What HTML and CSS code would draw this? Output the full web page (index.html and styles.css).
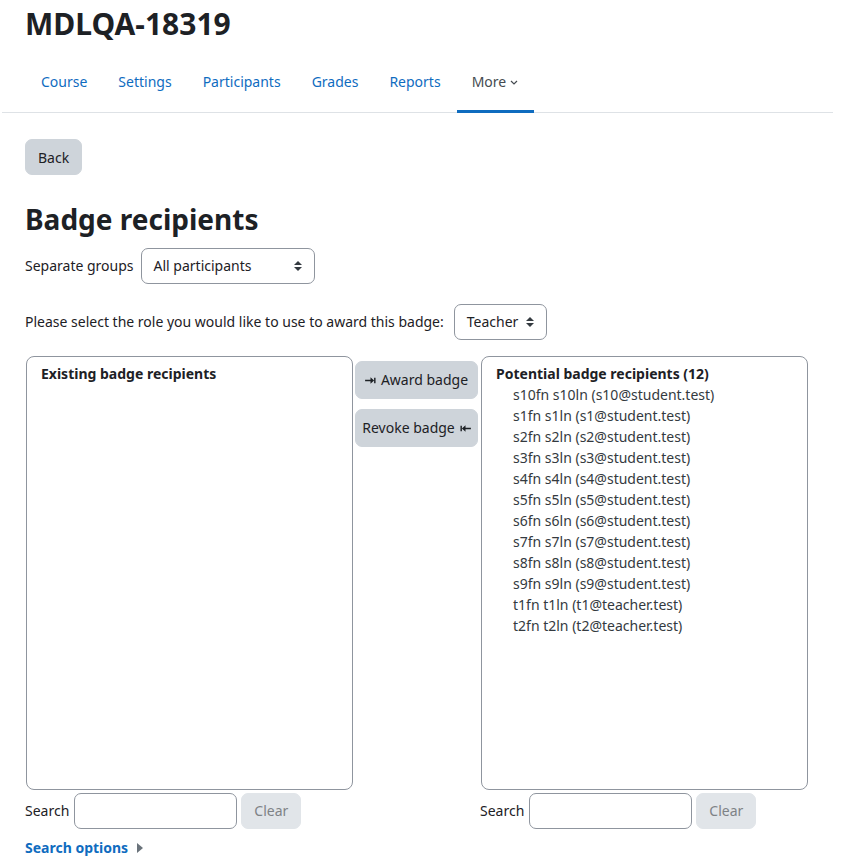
FILE: index.html
```html
<!DOCTYPE html>
<html>
<head>
    <meta charset="utf-8">
    <title>MDLQA-18319: Badge recipients</title>
    <meta name="viewport" content="width=device-width, initial-scale=1">
    <link rel="stylesheet" href="styles.css">
</head>
<body>

<div id="page">
    <header class="page-header">
        <h1>MDLQA-18319</h1>
    </header>

    <nav class="secondary-nav">
        <ul>
            <li><a href="#">Course</a></li>
            <li><a href="#">Settings</a></li>
            <li><a href="#">Participants</a></li>
            <li><a href="#">Grades</a></li>
            <li><a href="#">Reports</a></li>
            <li class="active">
                <a href="#">More
                    <svg class="chevron" viewBox="0 0 8 5"><path d="M1 1l3 3 3-3"></path></svg>
                </a>
            </li>
        </ul>
    </nav>

    <div id="region-main">
        <button class="btn">Back</button>

        <h2>Badge recipients</h2>

        <div class="form-row">
            <label>Separate groups</label>
            <div class="custom-select select-groups">
                <span>All participants</span>
                <svg class="updown" viewBox="0 0 4 5"><path d="M2 0L0 2h4zm0 5L0 3h4z"></path></svg>
            </div>
        </div>

        <div class="form-row role-row">
            <label>Please select the role you would like to use to award this badge:</label>
            <div class="custom-select select-role">
                <span>Teacher</span>
                <svg class="updown" viewBox="0 0 4 5"><path d="M2 0L0 2h4zm0 5L0 3h4z"></path></svg>
            </div>
        </div>

        <div class="recipients">
            <div class="col">
                <div class="listbox">
                    <div class="group-label">Existing badge recipients</div>
                </div>
                <div class="search">
                    <label>Search</label>
                    <div class="form-control"></div>
                    <button class="btn" disabled>Clear</button>
                </div>
                <a class="search-options" href="#">Search options <span class="caret"></span></a>
            </div>

            <div class="actions">
                <button class="btn">
                    <svg class="arrow" viewBox="0 0 12 10"><path d="M0 4.3h7v1.4H0z M6 1.5L10 5 6 8.5z M10 2h1.6v6H10z"></path></svg>
                    Award badge
                </button>
                <button class="btn">
                    Revoke badge
                    <svg class="arrow" viewBox="0 0 12 10"><path d="M0.4 2H2v6H0.4z M2 5L6 1.5v7z M5 4.3h7v1.4H5z"></path></svg>
                </button>
            </div>

            <div class="col">
                <div class="listbox">
                    <div class="group-label">Potential badge recipients (12)</div>
                    <div class="option">s10fn s10ln (s10@student.test)</div>
                    <div class="option">s1fn s1ln (s1@student.test)</div>
                    <div class="option">s2fn s2ln (s2@student.test)</div>
                    <div class="option">s3fn s3ln (s3@student.test)</div>
                    <div class="option">s4fn s4ln (s4@student.test)</div>
                    <div class="option">s5fn s5ln (s5@student.test)</div>
                    <div class="option">s6fn s6ln (s6@student.test)</div>
                    <div class="option">s7fn s7ln (s7@student.test)</div>
                    <div class="option">s8fn s8ln (s8@student.test)</div>
                    <div class="option">s9fn s9ln (s9@student.test)</div>
                    <div class="option">t1fn t1ln (t1@teacher.test)</div>
                    <div class="option">t2fn t2ln (t2@teacher.test)</div>
                </div>
                <div class="search">
                    <label>Search</label>
                    <div class="form-control"></div>
                    <button class="btn" disabled>Clear</button>
                </div>
            </div>
        </div>
    </div>
</div>

</body>
</html>
```

FILE: styles.css
```css
body {
    margin: 0;
    font-family: "Noto Sans", "Open Sans", sans-serif;
    font-size: 14px;
    line-height: 22px;
    color: #1d2125;
    background: #fff;
}
#page {
    margin-left: 2px;
    width: 831px;
}

/* header */
.page-header {padding: 5px 0 0 23px;}
.page-header h1 {
    margin: 0;
    font-size: 30px;
    line-height: 38px;
    font-weight: 700;
}

/* secondary navigation */
.secondary-nav {
    margin-top: 8px;
    border-bottom: 1px solid #dee2e6;
}
.secondary-nav ul {
    list-style: none;
    margin: 0 0 -1px 0;
    padding: 0 0 0 23px;
    display: flex;
}
.secondary-nav a {
    display: flex;
    align-items: center;
    padding: 20px 16px 17px;
    border-bottom: 3px solid transparent;
    color: #0f6cbf;
    text-decoration: none;
}
.secondary-nav li + li a {padding-left: 15px;}
.secondary-nav .active a {
    color: #454b51;
    border-bottom-color: #0f6cbf;
}
.chevron {
    width: 8px;
    height: 5px;
    margin-left: 4px;
    fill: none;
    stroke: #454b51;
    stroke-width: 1.2;
}

/* main */
#region-main {padding: 26px 0 0 23px;}

.btn {
    font: inherit;
    color: #1d2125;
    background: #ced4da;
    border: 1px solid #ced4da;
    border-radius: 7px;
    padding: 7px 12px 5px;
    line-height: 22px;
    cursor: pointer;
}
.btn:disabled {
    background: #e1e5e9;
    border-color: #e1e5e9;
    color: #7e8286;
    cursor: default;
}

h2 {
    margin: 27px 0 0;
    font-size: 28px;
    line-height: 34px;
    font-weight: 700;
}

.form-row {
    display: flex;
    align-items: center;
    margin-top: 12px;
}
.form-row label {margin-right: 7px;}
.role-row {margin-top: 20px;}
.role-row label {margin-right: 10px;}

.custom-select {
    display: flex;
    align-items: center;
    justify-content: space-between;
    box-sizing: border-box;
    height: 36px;
    padding: 0 12px;
    border: 1px solid #8f959e;
    border-radius: 7px;
    color: #1d2125;
}
.select-groups {width: 174px;}
.select-role {width: 93px;}
.updown {
    width: 8px;
    height: 10px;
    fill: #343a40;
}

/* recipient selector */
.recipients {
    display: grid;
    grid-template-columns: 328px 123px 328px;
    column-gap: 2px;
    margin-top: 16px;
}
.listbox {
    box-sizing: border-box;
    height: 434px;
    margin-left: 1px;
    padding: 6px 14px;
    border: 1px solid #8f959e;
    border-radius: 8px;
    line-height: 21px;
}
.group-label {font-weight: 700;}
.option {
    padding-left: 17px;
    color: #343a40;
}

.actions {
    display: flex;
    flex-direction: column;
    padding-top: 5px;
    gap: 10px;
}
.actions .btn {
    display: flex;
    align-items: center;
    justify-content: center;
    gap: 5px;
    padding: 7px 0;
    width: 123px;
}
.arrow {
    width: 11px;
    height: 9px;
    fill: #1d2125;
}

.search {
    display: flex;
    align-items: center;
    margin-top: 3px;
}
.search label {margin-right: 5px;}
.form-control {
    box-sizing: border-box;
    width: 163px;
    height: 36px;
    border: 1px solid #8f959e;
    border-radius: 7px;
    margin-right: 4px;
}
.search .btn {
    width: 60px;
    padding: 6px 0;
}

.search-options {
    display: inline-flex;
    align-items: center;
    margin-top: 8px;
    font-weight: 700;
    color: #0f6cbf;
    text-decoration: none;
}
.caret {
    width: 0;
    height: 0;
    margin-left: 9px;
    border-top: 5px solid transparent;
    border-bottom: 5px solid transparent;
    border-left: 6px solid #6a737b;
}
```
